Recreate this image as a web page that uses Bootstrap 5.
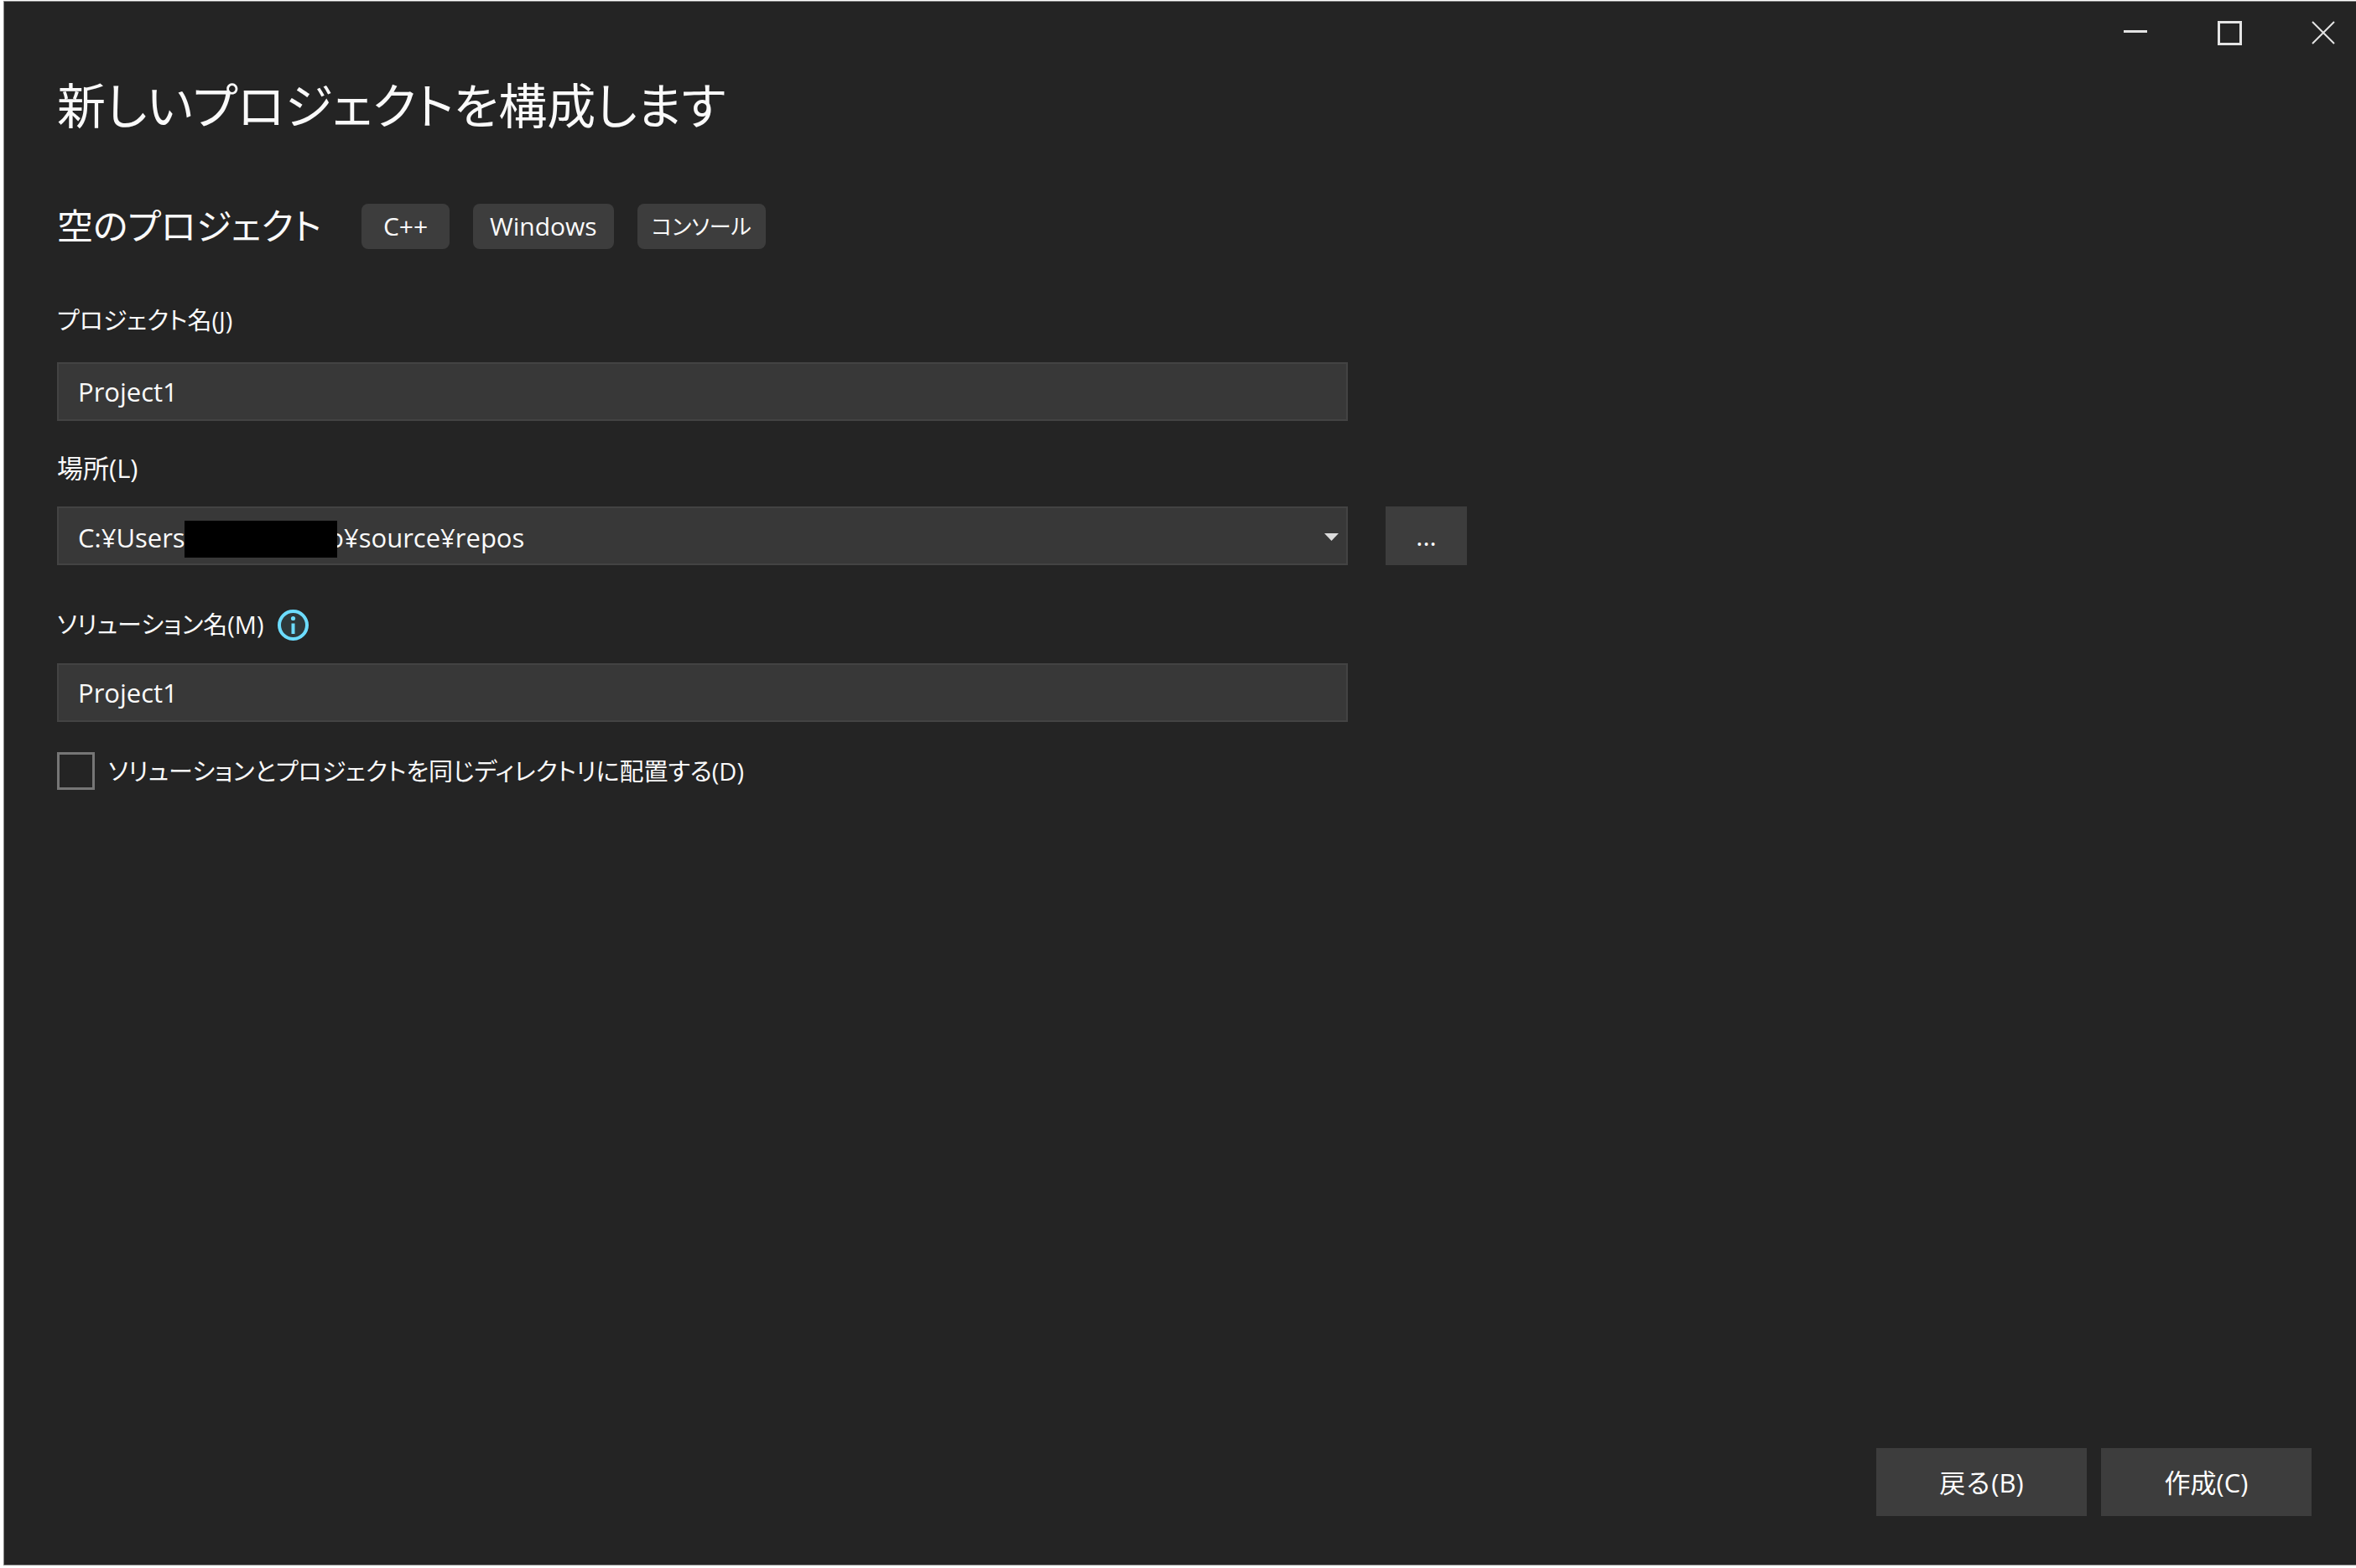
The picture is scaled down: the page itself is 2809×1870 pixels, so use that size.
<!DOCTYPE html>
<html lang="ja">
<head>
<meta charset="utf-8">
<meta name="viewport" content="width=device-width, initial-scale=1">
<title>新しいプロジェクトを構成します</title>
<link href="https://cdn.jsdelivr.net/npm/bootstrap@5.3.0/dist/css/bootstrap.min.css" rel="stylesheet">
<style>
  body {
    background: #fff;
    color: #fafafa;
    font-family: "Open Sans", "Noto Sans CJK JP", sans-serif;
    font-size: 31px;
    line-height: 40px;
    font-feature-settings: "palt";
  }
  .dialog-frame { padding: 1px 0 3px 4px; }
  .dialog-window { background: #242424; border: 1px solid #8a8a8a; border-right: 0; }
  .title-controls { gap: 55px; padding: 8px 11px 0 0; height: 76px; }
  .title-controls button { width: 57px; height: 57px; border: 0; background: none; color: #e4e4e4; padding: 0; }
  .title-controls svg { width: 30px; height: 30px; display: block; margin: 0 auto; }
  .dialog-body { padding: 0 53px 0 63px; }
  .dialog-title { font-size: 58px; line-height: 96px; margin: 0 0 64px; font-weight: 400; }
  .template-name { font-size: 43px; line-height: 64px; margin: 0 20px 0 0; font-weight: 400; }
  .template-row { gap: 28px; margin-bottom: 60px; }
  .template-tag { background: #3d3d3d; border-radius: 8px; padding: 7px 20px; min-width: 105px; text-align: center; font-size: 30px; }
  .template-tag-kana { font-size: 26px; padding: 7px 17px; }
  .form-column { width: 100%; max-width: 1539px; }
  .field-group { margin-bottom: 36px; }
  .field-label { margin: 0 0 26px; }
  .kana-text { font-size: 29px; }
  .field-box, .field-box:focus {
    height: 70px; padding: 0 23px; border: 2px solid #434343; border-radius: 0;
    background: #383838; color: #fafafa; font: inherit; box-shadow: none;
  }
  .field-combo { padding-top: 4px; }
  .combo-arrow { position: absolute; right: 11px; top: 32px; width: 17px; height: 9px; pointer-events: none; }
  .redaction { position: absolute; left: 152px; top: 17px; width: 182px; height: 44px; background: #000; }
  .location-row { gap: 45px; margin-bottom: 51px; }
  .flat-button, .flat-button:hover { background: #3d3d3d; color: #fff; border: 0; border-radius: 0; font-size: 31px; line-height: 40px; }
  .browse-button { width: 97px; height: 70px; }
  .footer-button { width: 251px; height: 81px; }
  .info-icon { width: 37px; height: 37px; }
  .same-dir { width: 45px; height: 45px; border: 3px solid #767676; border-radius: 0 !important; background: #242424; margin: 0; }
  .dialog-footer { gap: 17px; padding: 0 53px 58px; }
</style>
</head>
<body>
<div class="dialog-frame d-flex flex-column min-vh-100">
  <div class="dialog-window d-flex flex-column flex-grow-1">
    <header class="title-controls d-flex justify-content-end">
      <button type="button" aria-label="最小化"><svg viewBox="0 0 30 30"><path d="M1 13.500h28" stroke="currentColor" stroke-width="3"/></svg></button>
      <button type="button" aria-label="最大化"><svg viewBox="0 0 30 30"><rect x="2.500" y="2.500" width="26" height="26" fill="none" stroke="currentColor" stroke-width="3"/></svg></button>
      <button type="button" aria-label="閉じる"><svg viewBox="0 0 30 30"><path d="M2 2L28 28M28 2L2 28" stroke="currentColor" stroke-width="2"/></svg></button>
    </header>
    <main class="dialog-body flex-grow-1">
      <h1 class="dialog-title">新しいプロジェクトを構成します</h1>
      <div class="template-row d-flex align-items-center">
        <h2 class="template-name">空のプロジェクト</h2>
        <span class="template-tag">C++</span>
        <span class="template-tag">Windows</span>
        <span class="template-tag template-tag-kana">コンソール</span>
      </div>
      <form>
        <div class="form-column field-group">
          <label class="field-label kana-text d-block pb-1" for="projectName">プロジェクト名(J)</label>
          <input class="field-box form-control" id="projectName" type="text" value="Project1">
        </div>
        <label class="field-label d-block" for="location">場所(L)</label>
        <div class="location-row d-flex align-items-center">
          <div class="form-column position-relative">
            <select class="field-box field-combo form-select" id="location">
              <option>C:¥Users¥&nbsp;&nbsp;&nbsp;&nbsp;&nbsp;&nbsp;&nbsp;&nbsp;&nbsp;&nbsp;&nbsp;&nbsp;&nbsp;&nbsp;&nbsp;&nbsp;&nbsp;&nbsp;&nbsp;o¥source¥repos</option>
            </select>
            <span class="redaction"></span>
            <svg class="combo-arrow" viewBox="0 0 17 9"><path d="M0 0h17L8.500 9z" fill="#dcdcdc"/></svg>
          </div>
          <button type="button" class="btn flat-button browse-button flex-shrink-0">...</button>
        </div>
        <div class="form-column field-group">
          <div class="field-label d-flex align-items-center">
            <label class="kana-text" for="solutionName">ソリューション名(M)</label>
            <svg class="info-icon ms-3" viewBox="0 0 37 37" role="img" aria-label="情報">
              <circle cx="18.500" cy="18.500" r="16.500" fill="#2d383b" stroke="#6cdcff" stroke-width="4"/>
              <circle cx="18.500" cy="10.500" r="2.600" fill="#6cdcff"/>
              <path d="M18.500 16.500v12.500" stroke="#6cdcff" stroke-width="4"/>
            </svg>
          </div>
          <input class="field-box form-control" id="solutionName" type="text" value="Project1">
        </div>
        <div class="d-flex align-items-center">
          <input class="form-check-input same-dir" id="sameDirectory" type="checkbox">
          <label class="kana-text ms-3" for="sameDirectory">ソリューションとプロジェクトを同じディレクトリに配置する(D)</label>
        </div>
      </form>
    </main>
    <footer class="dialog-footer d-flex justify-content-end">
      <button type="button" class="btn flat-button footer-button">戻る(B)</button>
      <button type="button" class="btn flat-button footer-button">作成(C)</button>
    </footer>
  </div>
</div>
<script src="https://cdn.jsdelivr.net/npm/bootstrap@5.3.0/dist/js/bootstrap.bundle.min.js"></script>
</body>
</html>
